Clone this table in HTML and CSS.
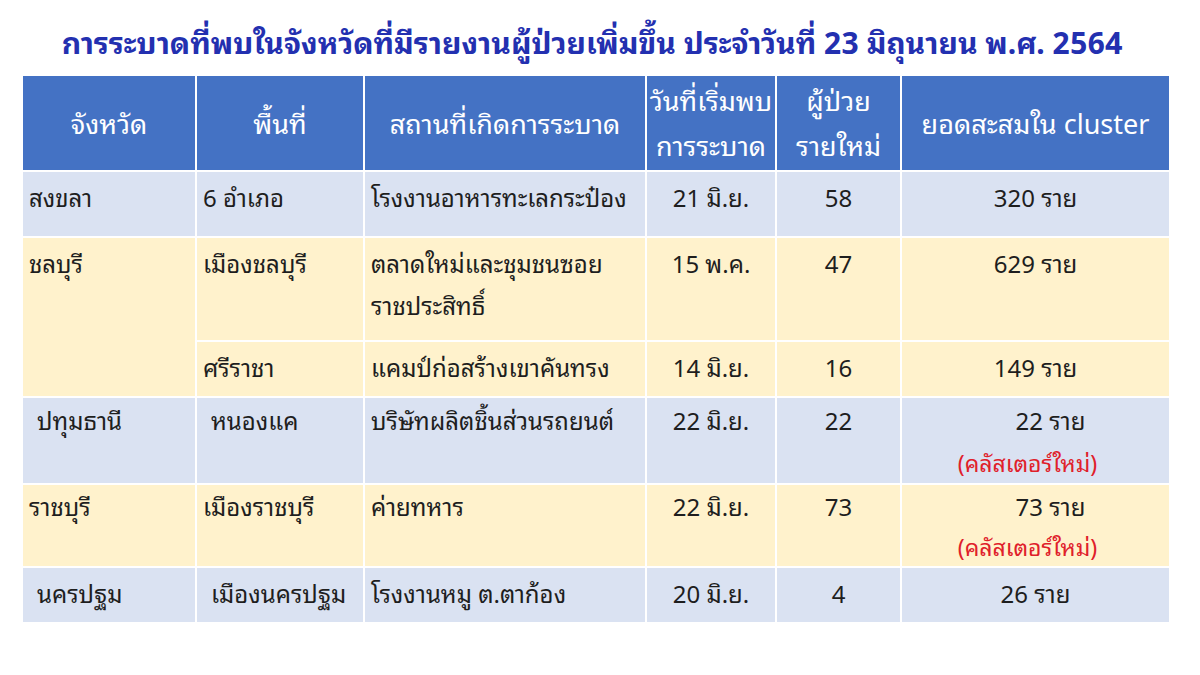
FILE: index.html
```html
<!DOCTYPE html>
<html lang="th">
<head>
<meta charset="utf-8">
<link rel="stylesheet" href="styles.css">
</head>
<body>
<h1 class="title">การระบาดที่พบในจังหวัดที่มีรายงานผู้ป่วยเพิ่มขึ้น ประจำวันที่ 23 มิถุนายน พ.ศ. 2564</h1>
<table class="grid">
  <colgroup>
    <col class="c1"><col class="c2"><col class="c3"><col class="c4"><col class="c5"><col class="c6">
  </colgroup>
  <thead>
    <tr class="head">
      <th>จังหวัด</th>
      <th>พื้นที่</th>
      <th>สถานที่เกิดการระบาด</th>
      <th class="two">วันที่เริ่มพบ<br>การระบาด</th>
      <th class="two">ผู้ป่วย<br>รายใหม่</th>
      <th>ยอดสะสมใน cluster</th>
    </tr>
  </thead>
  <tbody>
    <tr class="blue r1">
      <td>สงขลา</td><td>6 อำเภอ</td><td>โรงงานอาหารทะเลกระป๋อง</td>
      <td class="ctr">21 มิ.ย.</td><td class="ctr">58</td><td class="ctr">320 ราย</td>
    </tr>
    <tr class="yellow r2">
      <td rowspan="2">ชลบุรี</td><td>เมืองชลบุรี</td><td>ตลาดใหม่และชุมชนซอย<br>ราชประสิทธิ์</td>
      <td class="ctr">15 พ.ค.</td><td class="ctr">47</td><td class="ctr">629 ราย</td>
    </tr>
    <tr class="yellow r3">
      <td>ศรีราชา</td><td>แคมป์ก่อสร้างเขาคันทรง</td>
      <td class="ctr">14 มิ.ย.</td><td class="ctr">16</td><td class="ctr">149 ราย</td>
    </tr>
    <tr class="blue r4">
      <td class="ind">ปทุมธานี</td><td class="ind">หนองแค</td><td>บริษัทผลิตชิ้นส่วนรถยนต์</td>
      <td class="ctr">22 มิ.ย.</td><td class="ctr">22</td><td class="ctr"><span class="shift">22 ราย</span><br><span class="new">(คลัสเตอร์ใหม่)</span></td>
    </tr>
    <tr class="yellow r5">
      <td>ราชบุรี</td><td>เมืองราชบุรี</td><td>ค่ายทหาร</td>
      <td class="ctr">22 มิ.ย.</td><td class="ctr">73</td><td class="ctr"><span class="shift">73 ราย</span><br><span class="new">(คลัสเตอร์ใหม่)</span></td>
    </tr>
    <tr class="blue r6">
      <td class="ind">นครปฐม</td><td class="ind2">เมืองนครปฐม</td><td>โรงงานหมู ต.ตาก้อง</td>
      <td class="ctr">20 มิ.ย.</td><td class="ctr">4</td><td class="ctr">26 ราย</td>
    </tr>
  </tbody>
</table>
</body>
</html>
```
FILE: styles.css
```css
html, body {
  margin: 0;
  padding: 0;
  background: #ffffff;
}
body {
  font-family: "Noto Sans Thai Looped", "Noto Sans Thai", "Noto Sans", sans-serif;
  color: #1e1e1e;
}
.title {
  margin: 0;
  padding: 19px 16px 0 0;
  height: 74px;
  box-sizing: border-box;
  text-align: center;
  font-size: 30px;
  line-height: 44px;
  font-weight: bold;
  color: #2330b0;
  white-space: nowrap;
}
.grid {
  margin: 0 0 0 21px;
  width: 1148px;
  table-layout: fixed;
  border-collapse: collapse;
}
.c1 { width: 174px; }
.c2 { width: 168px; }
.c3 { width: 282px; }
.c4 { width: 130px; }
.c5 { width: 125px; }
.c6 { width: 269px; }
.grid th,
.grid td {
  border: 2px solid #ffffff;
  vertical-align: top;
  font-size: 24px;
  line-height: 42px;
}
.grid th {
  background: #4472c4;
  color: #ffffff;
  font-weight: normal;
  text-align: center;
  vertical-align: middle;
  font-size: 27px;
  line-height: 45px;
  height: 88px;
  padding: 0 2px 4px;
  white-space: nowrap;
}
.grid td {
  text-align: left;
  padding: 3px 6px 0 6px;
  white-space: nowrap;
}
.blue td { background: #dae2f2; }
.yellow td { background: #fff2cc; }
.grid td.ctr { text-align: center; }
.grid td.ind { padding-left: 14px; }
.grid td.ind2 { padding-left: 14px; }
.shift { position: relative; left: 15px; }
.new { color: #e0202a; font-size: 23px; position: relative; left: -8px; }
.r1 td { height: 61px; }
.r2 td { height: 99px; }
.r3 td { height: 51px; }
.grid .r4 td { height: 82px; padding-top: 0; line-height: 42px; }
.grid .r5 td { height: 80px; padding-top: 0; line-height: 40px; }
.r6 td { height: 51px; }
```
